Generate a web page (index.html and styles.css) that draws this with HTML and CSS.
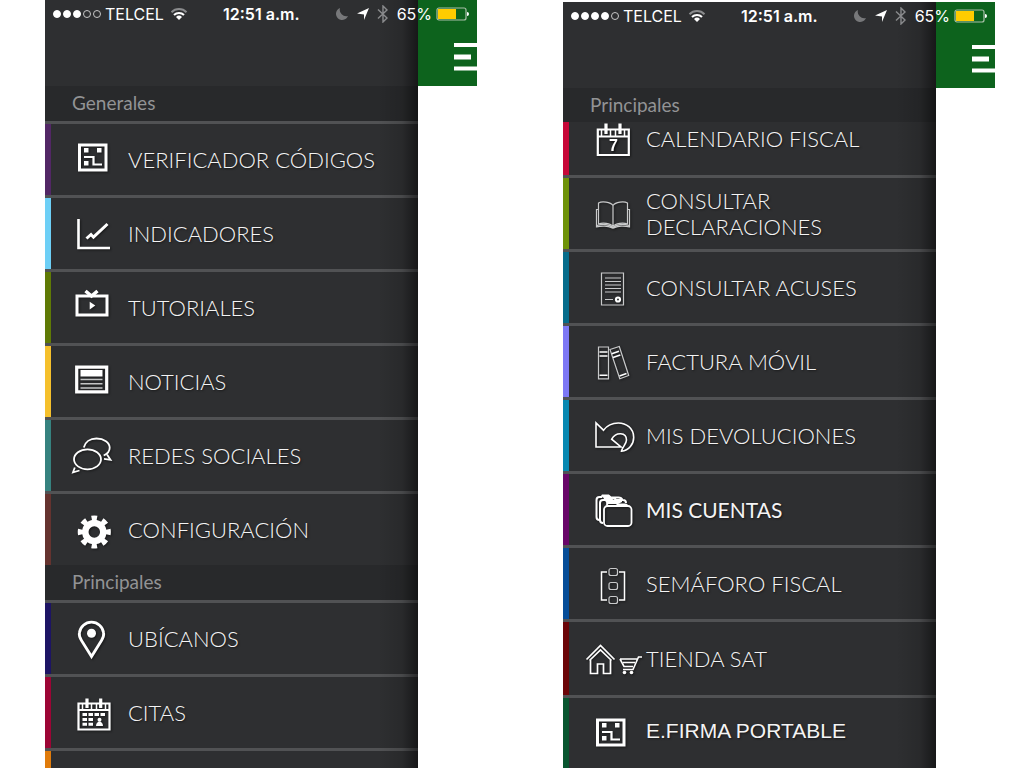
FILE: index.html
```html
<!DOCTYPE html>
<html lang="es">
<head>
  <meta charset="UTF-8" />
  <meta name="viewport" content="width=device-width, initial-scale=1.0" />
  <title>SAT Móvil</title>
  <link rel="stylesheet" href="styles.css">
</head>
<body>
  <!-- shared icons -->
  <svg class="sprite" aria-hidden="true">
    <symbol id="qr" viewBox="0 0 44 45">
      <path d="M8.500 8H35v25H8.500z" stroke-width="3"/>
      <path d="M13 11h4.500v4.500H13zM26 11h4.500v4.500H26zM13 24h4.500v4.500H13z" fill="#fff" stroke="none"/>
      <path d="M13 20h9.500v7.500h8.500" stroke-width="2.200"/>
    </symbol>
    <symbol id="wifi" viewBox="0 0 18 14">
      <path d="M1.500 5.200a10.500 10.500 0 0 1 15 0" stroke="#8a8b8d" stroke-width="2"/>
      <path d="M4 8a7 7 0 0 1 10 0" stroke-width="2"/>
      <path d="M6 10a4.300 4.300 0 0 1 6 0L9 13z" fill="#fff" stroke="none"/>
    </symbol>
    <symbol id="moon" viewBox="0 0 14 14">
      <path d="M5 1a6.200 6.200 0 1 0 8 8A6.500 6.500 0 0 1 5 1z" fill="#77787a" stroke="none"/>
    </symbol>
    <symbol id="arrow" viewBox="0 0 14 14">
      <path d="M13 1L8 13V7.500L1 6.500z" fill="#fff" stroke="none"/>
    </symbol>
    <symbol id="bluetooth" viewBox="0 0 12 18">
      <path d="M1 4.500l9 8.500-4 4V1l4 4-9 8.500" stroke="#8a8b8d" stroke-width="1.400"/>
    </symbol>
    <symbol id="battery" viewBox="0 0 34 14">
      <rect x="1" y="1" width="29" height="12" rx="2" stroke="#a9bfa9" stroke-width="1.200"/>
      <path d="M2 2h18v10H2z" fill="#fc0" stroke="none"/>
      <path d="M31 5q2 0 2 2t-2 2z" fill="#fff" stroke="none"/>
    </symbol>
    <symbol id="bars" viewBox="0 0 24 28">
      <path d="M1 0h23v4H1zM1 11.500h17v5H1zM1 23.500h23v4H1z" fill="#fff" stroke="none"/>
    </symbol>
  </svg>

  <main class="screens">
    <section class="phone">
      <div class="status">
        <span class="signal"><i class="on"></i><i class="on"></i><i class="on"></i><i></i><i></i></span>
        <span>TELCEL</span>
        <svg class="wifi"><use href="#wifi"/></svg>
        <b class="clock">12:51 a.m.</b>
        <svg class="moon"><use href="#moon"/></svg>
        <svg class="arrow"><use href="#arrow"/></svg>
        <svg class="bluetooth"><use href="#bluetooth"/></svg>
        <span>65%</span>
        <svg class="battery"><use href="#battery"/></svg>
      </div>
      <nav class="drawer">
        <h2>Generales</h2>
        <ul>
          <li><a href="#" class="item purple">
            <span class="icon"><svg><use href="#qr"/></svg></span>VERIFICADOR CÓDIGOS</a></li>
          <li><a href="#" class="item sky">
            <span class="icon"><svg viewBox="0 0 44 45">
              <path d="M7.500 8v29H39" stroke-width="2.600"/>
              <path d="M15.500 27.500L20 23.500l2.500 2.700L36.500 13" stroke-width="3"/>
            </svg></span>INDICADORES</a></li>
          <li><a href="#" class="item olive">
            <span class="icon"><svg viewBox="0 0 44 45">
              <path d="M6 11h30v19H6z" stroke-width="3"/>
              <path d="M14.500 6l6 5 6-5" stroke-width="3.500"/>
              <path d="M18.700 16.800v7.700l5.600-3.900z" fill="#fff" stroke="none"/>
            </svg></span>TUTORIALES</a></li>
          <li><a href="#" class="item yellow">
            <span class="icon"><svg viewBox="0 0 44 45">
              <path d="M5.700 8.200h30v24.700h-30z" stroke-width="3.200"/>
              <path d="M9.500 11h22v6.500h-22z" fill="#fff" stroke="none"/>
              <path d="M9.500 20.500h22m-22 4.300h22m-22 4.200h22" stroke="#c4c5c6" stroke-width="1.600"/>
            </svg></span>NOTICIAS</a></li>
          <li><a href="#" class="item teal">
            <span class="icon"><svg viewBox="0 0 44 45">
              <ellipse cx="16.500" cy="26.300" rx="13.500" ry="10"/>
              <path d="M12.800 14.500C14 9 19 5.500 25.500 5.500c7.500 0 13.200 4 13.200 9.200 0 3.300-2 6-6 7.800"/>
              <path d="M36 21.500l3.500 5.300-6.500-1M3.800 34.500l-1.800 4.800L8.500 37.500"/>
            </svg></span>REDES SOCIALES</a></li>
          <li><a href="#" class="item brown">
            <span class="icon"><svg viewBox="0 0 44 45">
              <circle cx="23.300" cy="25" r="9" stroke-width="6.500"/>
              <circle cx="23.300" cy="25" r="13.800" stroke-width="5.500" pathLength="16" stroke-dasharray="1 1" stroke-dashoffset=".5"/>
            </svg></span>CONFIGURACIÓN</a></li>
        </ul>
        <h2>Principales</h2>
        <ul>
          <li><a href="#" class="item navy">
            <span class="icon"><svg viewBox="0 0 44 45">
              <path d="M20.500 40.500l-10-16C8 20.500 8 18.800 8.400 16.800a12.200 12.200 0 0 1 24.200 0c.4 2 0 4.200-2.100 7.700z" stroke-width="2.800"/>
              <circle cx="20.500" cy="17.200" r="4.500" fill="#fff" stroke="none"/>
            </svg></span>UBÍCANOS</a></li>
          <li><a href="#" class="item crimson">
            <span class="icon"><svg viewBox="0 0 44 45">
              <path d="M7.500 13.500h31v26h-31zM7.500 20h31" stroke-width="2.200"/>
              <path d="M11.500 13.500v6M20.500 13.500v6M25.500 13.500v6M34.500 13.500v6" stroke-width="1.500"/>
              <path d="M16 8.500v9.500M29.700 8.500v9.500" stroke-width="3.200"/>
              <path d="M11.500 24.500h23" stroke-width="3" stroke-dasharray="4.500 1.500"/>
              <path d="M11.500 29.500h11m-11 4.800h11" stroke-width="3" stroke-dasharray="4.500 1.500"/>
              <circle cx="28.500" cy="29.800" r="2" fill="#fff" stroke="none"/>
              <path d="M25 36c0-3 2-4.500 3.500-4.500S32 33 32 36z" fill="#fff" stroke="none"/>
            </svg></span>CITAS</a></li>
          <li class="item orange"></li>
        </ul>
      </nav>
      <header class="topbar">
        <button class="menu-btn" aria-label="Menú"><svg><use href="#bars"/></svg></button>
      </header>
    </section>

    <section class="phone scrolled">
      <div class="status">
        <span class="signal"><i class="on"></i><i class="on"></i><i class="on"></i><i class="on"></i><i></i></span>
        <span>TELCEL</span>
        <svg class="wifi"><use href="#wifi"/></svg>
        <b class="clock">12:51 a.m.</b>
        <svg class="moon"><use href="#moon"/></svg>
        <svg class="arrow"><use href="#arrow"/></svg>
        <svg class="bluetooth"><use href="#bluetooth"/></svg>
        <span>65%</span>
        <svg class="battery"><use href="#battery"/></svg>
      </div>
      <nav class="drawer">
        <h2>Principales</h2>
        <ul>
          <li><a href="#" class="item red cut">
            <span class="icon"><svg viewBox="0 0 44 45">
              <path d="M8.800 13.500h31v25.500h-31zM8.800 20.500h31" stroke-width="2.200"/>
              <path d="M12.500 13.500v6.500M21.500 13.500v6.500M26.500 13.500v6.500M35.500 13.500v6.500" stroke-width="1.500"/>
              <path d="M17 7.500v10.500M31 7.500v10.500" stroke-width="3.200"/>
              <text x="24.500" y="35" text-anchor="middle">7</text>
            </svg></span>CALENDARIO FISCAL</a></li>
          <li><a href="#" class="item green">
            <span class="icon"><svg viewBox="0 0 44 45" class="thin">
              <path d="M24 14.500c-2.500-3.500-11-4.500-14.500-2.500V33c4-1.500 12-1 14.500 2.500zM24 14.500c2.500-3.500 11-4.500 14.500-2.500V33c-4-1.500-12-1-14.500 2.500z"/>
              <path d="M9.500 18.500h-2v17.300c5-1.200 12-1 14.500.7q2 1.200 4 0c2.500-1.700 9.500-1.900 14.500-.7V18.500h-2M8 34.500c6-2 13-1 16 2 3-3 10-4 16-2"/>
            </svg></span>CONSULTAR DECLARACIONES</a></li>
          <li><a href="#" class="item petrol">
            <span class="icon"><svg viewBox="0 0 44 45" class="thin">
              <path d="M12.500 8h22v32h-22z"/>
              <path d="M16 13h16M16 16.500h16M16 20h16M16 23.500h16M16 27h16M16 34.500h8"/>
              <circle cx="29" cy="34.500" r="2" stroke="#fff" stroke-width="2.200"/>
            </svg></span>CONSULTAR ACUSES</a></li>
          <li><a href="#" class="item violet">
            <span class="icon"><svg viewBox="0 0 44 45" class="thin">
              <path d="M9.500 8h10v31.800h-10zM21 10.500L30.300 7.500l9.400 29-8.900 3.200z"/>
              <path d="M10.500 13h8M10.500 17h8M10.500 36.300h8M22.800 14.800l7.200-2.600M24 18.600l7.300-2.600M30.500 37l7-2.500" stroke="#fff" stroke-width="1.600"/>
            </svg></span>FACTURA MÓVIL</a></li>
          <li><a href="#" class="item cyan">
            <span class="icon"><svg viewBox="0 0 44 45">
              <path d="M7 10v24h25l-9.300-7.800C27 18.500 37.500 19 37.500 27c0 4-4.500 7.500-5 11.200 7.500-.7 12.200-7.200 12.200-13.700C44.700 15 37 10 29.300 10 23 10 18 12.500 14.500 17.200z" stroke-width="1.600"/>
            </svg></span>MIS DEVOLUCIONES</a></li>
          <li><a href="#" class="item plum medium">
            <span class="icon"><svg viewBox="0 0 44 45">
              <rect x="15" y="19" width="27.500" height="20" rx="3.500"/>
              <path d="M18 18.500v-1q0-1.500 2-1.500h7l2 1.500h7q2 0 2 1.500"/>
              <path d="M14 36q-3 0-3-3V16q0-3 3-3h3l1-2h7l2 2h7q3 0 3 3M10.500 33q-3 0-3-3V13q0-3 3-3h2l1-1.500h6l2 2h8q3 0 4 2.500" stroke-width="2"/>
              <path d="M13 8.500h8l3 4h9v2.500l-4 2-6-1-5 1z" fill="#fff" stroke="none"/>
            </svg></span>MIS CUENTAS</a></li>
          <li><a href="#" class="item blue">
            <span class="icon"><svg viewBox="0 0 44 45" class="thin">
              <path d="M18 11h-5.500v28H18M30 11h5.500v28H30" stroke="#fff" stroke-width="1.500"/>
              <rect x="20" y="7.500" width="8.500" height="7" rx="2"/>
              <rect x="20" y="21.500" width="8.500" height="7" rx="2"/>
              <rect x="20" y="35.500" width="8.500" height="7" rx="2"/>
            </svg></span>SEMÁFORO FISCAL</a></li>
          <li><a href="#" class="item maroon tall">
            <span class="icon"><svg viewBox="0 0 62 45" class="wide">
              <path d="M6.500 23.500L20.500 9.500l14 14M9.500 24.500L20.500 14l11 10.500M10.500 24v13.500h7V28h6v9.500h7V24" stroke-width="1.700"/>
              <path d="M62 21h-3.500L53 33.500H43M40 23h17M40 23l4 7.500h9M43 26.500h12" stroke-width="1.600"/>
              <circle cx="44.500" cy="36.500" r="1.800" fill="#fff" stroke="none"/>
              <circle cx="51.500" cy="36.500" r="1.800" fill="#fff" stroke="none"/>
            </svg></span>TIENDA SAT</a></li>
          <li><a href="#" class="item forest last">
            <span class="icon low"><svg><use href="#qr"/></svg></span>E.FIRMA PORTABLE</a></li>
        </ul>
      </nav>
      <header class="topbar">
        <button class="menu-btn" aria-label="Menú"><svg><use href="#bars"/></svg></button>
      </header>
    </section>
  </main>
</body>
</html>
```
FILE: styles.css
```css
:root {
  --drawer: #2e2f31;
  --heading: #28292b;
  --line: #515254;
  --green: #0d631d;
}
* {
  box-sizing: border-box;
}
body {
  margin: 0;
  background: #fff;
  font-family: Lato, "Liberation Sans", sans-serif;
  color: #f4f4f4;
}
svg {
  display: block;
  flex-shrink: 0;
  fill: none;
  stroke: #fff;
  stroke-width: 1.8;
}
.sprite {
  position: absolute;
  width: 0;
  height: 0;
}
.screens {
  display: grid;
  grid-template-columns: 1fr 1fr;
  gap: 86px;
  height: 100vh;
  padding: 0 29px 0 45px;
  overflow: hidden;
}
.phone {
  position: relative;
  display: flex;
  align-items: flex-start;
}
.phone.scrolled {
  margin-top: 2px;
}

/* status bar lies over the drawer and the green bar */
.status {
  position: absolute;
  z-index: 2;
  top: 0;
  left: 0;
  right: 0;
  display: flex;
  align-items: center;
  height: 28px;
  padding: 0 7px 0 8px;
  font-family: Inter, "Liberation Sans", sans-serif;
  font-size: 16px;
  color: #fff;
}
.signal {
  display: flex;
  gap: 2px;
  margin-right: 4px;
}
.signal i {
  width: 8px;
  height: 8px;
  border: 1px solid #c8c8c8;
  border-radius: 50%;
}
.signal .on {
  background: #fff;
  border-color: #fff;
}
.wifi {
  width: 18px;
  height: 14px;
  margin-left: 6px;
}
.clock {
  margin: 0 auto;
  font-weight: 600;
}
.moon, .arrow {
  width: 14px;
  height: 14px;
  margin-right: 7px;
}
.bluetooth {
  width: 12px;
  height: 18px;
  margin-right: 8px;
}
.battery {
  width: 34px;
  height: 14px;
  margin-left: 4px;
}

.drawer {
  position: relative;
  flex: 1;
  height: 100vh;
  padding-top: 86px;
  background: var(--drawer);
  overflow: hidden;
}
.drawer::after {
  content: "";
  position: absolute;
  top: 0;
  right: 0;
  bottom: 0;
  width: 40px;
  background: linear-gradient(to right, rgba(0,0,0,0), rgba(0,0,0,0.12) 60%, rgba(0,0,0,0.5));
  pointer-events: none;
}
.drawer h2 {
  height: 35px;
  margin: 0;
  padding-left: 27px;
  background: var(--heading);
  color: #929395;
  font-size: 19px;
  font-weight: 400;
  line-height: 34px;
}
.scrolled h2 {
  height: 34px;
}
.drawer ul {
  list-style: none;
  margin: 0;
  padding: 0;
}
.item {
  position: relative;
  display: flex;
  align-items: center;
  gap: 13px;
  height: 74px;
  padding: 0 32px 0 26px;
  border-top: 3px solid var(--line);
  color: inherit;
  font-size: 22px;
  font-weight: 300;
  line-height: 26px;
  text-decoration: none;
  text-shadow: 1px 1px 2px rgba(0,0,0,0.5);
}
.item::before {
  content: "";
  position: absolute;
  left: 0;
  top: 0;
  bottom: 0;
  width: 6px;
  background: var(--bar);
}
.icon {
  display: flex;
  flex: 0 0 44px;
  min-width: 0;
  justify-content: center;
  filter: drop-shadow(1px 1px 1px rgba(0,0,0,0.5));
}
.icon svg {
  width: 44px;
  height: 45px;
  overflow: visible;
}
.icon .wide {
  width: 62px;
}
.icon .thin {
  stroke: #c9cacb;
  stroke-width: 1.2;
}
.icon text {
  fill: #fff;
  stroke: none;
  font: bold 16px "Liberation Sans", sans-serif;
}
.icon.low {
  padding-top: 8px;
}
.item.cut {
  height: 53px;
  padding-bottom: 20px;
  border-top: 0;
}
.item.tall {
  height: 76px;
}
.item.medium {
  font-size: 21px;
  font-weight: 400;
}
.item.last {
  padding-bottom: 6px;
  font-family: "Liberation Sans", sans-serif;
  font-size: 21px;
  font-weight: 400;
}

.purple { --bar: #522765; }
.sky { --bar: #6dcff6; }
.olive { --bar: #5f7a05; }
.yellow { --bar: #f5c02c; }
.teal { --bar: #36827f; }
.brown { --bar: #65332f; }
.navy { --bar: #1d1464; }
.crimson { --bar: #9c0535; }
.orange { --bar: #e07b0b; }
.red { --bar: #c60838; }
.green { --bar: #6e9209; }
.petrol { --bar: #066c8b; }
.violet { --bar: #7d78f5; }
.cyan { --bar: #0788b1; }
.plum { --bar: #680668; }
.blue { --bar: #064d98; }
.maroon { --bar: #6b0508; }
.forest { --bar: #08552f; }

.topbar {
  display: flex;
  justify-content: flex-end;
  width: 59px;
  height: 86px;
  padding-top: 43px;
  background: var(--green);
}
.menu-btn {
  height: 28px;
  padding: 0;
  background: none;
  border: none;
  cursor: pointer;
}
.menu-btn svg {
  width: 24px;
  height: 28px;
}
```
